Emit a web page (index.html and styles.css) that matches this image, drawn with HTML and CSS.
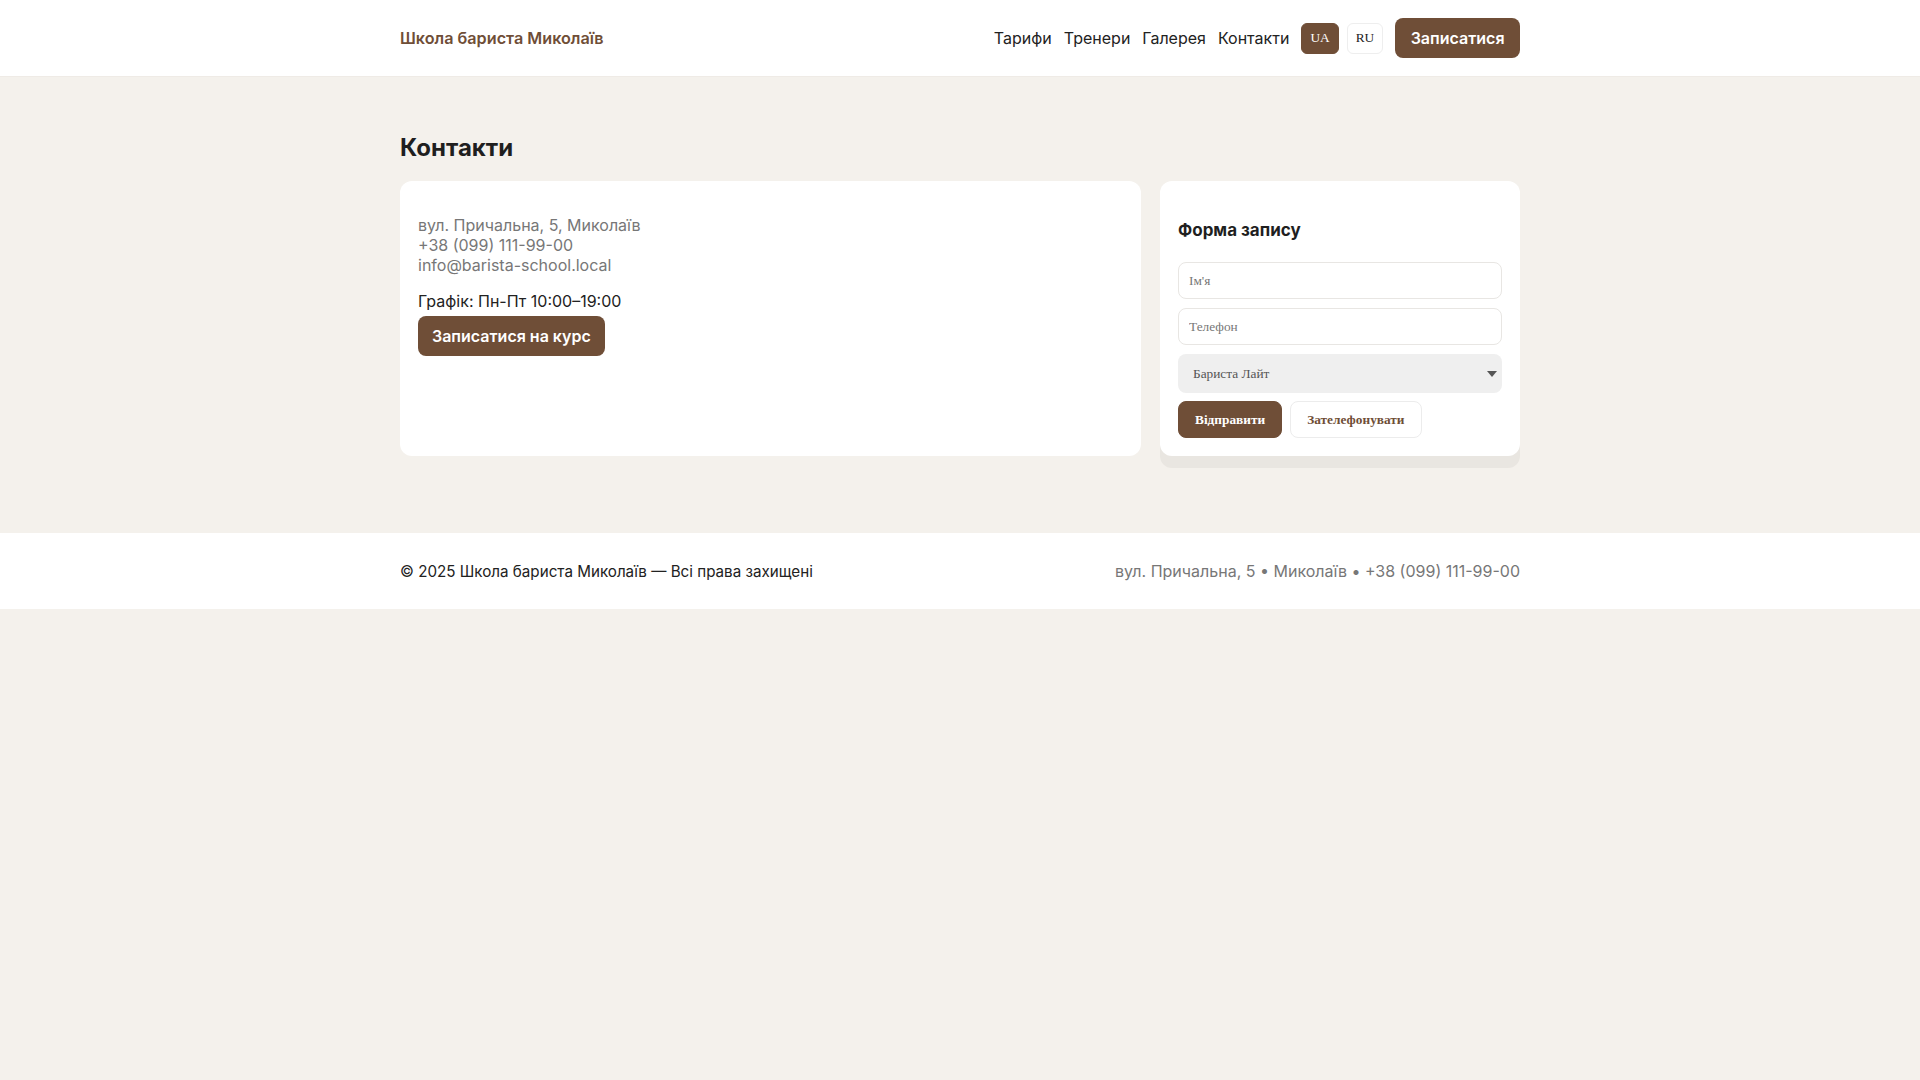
FILE: index.html
```html
<!DOCTYPE html>
<html lang="uk">
<head>
<meta charset="utf-8">
<title>Контакти — Школа бариста Миколаїв</title>
<link rel="stylesheet" href="styles.css">
</head>
<body>
<header class="site-header">
  <div class="container header-inner">
    <a class="logo" href="#">Школа бариста Миколаїв</a>
    <nav class="nav">
      <a href="#">Тарифи</a>
      <a href="#">Тренери</a>
      <a href="#">Галерея</a>
      <a href="#">Контакти</a>
      <button class="lang lang-active">UA</button>
      <button class="lang">RU</button>
      <a class="btn btn-header" href="#">Записатися</a>
    </nav>
  </div>
</header>

<main class="main">
  <div class="container">
    <h1 class="page-title">Контакти</h1>
    <div class="contact-grid">
      <section class="card info-card">
        <p class="info-lines">вул. Причальна, 5, Миколаїв<br>+38 (099) 111-99-00<br>info@barista-school.local</p>
        <p class="schedule">Графік: Пн-Пт 10:00–19:00</p>
        <a class="btn btn-course" href="#">Записатися на курс</a>
      </section>
      <aside class="card form-card">
        <h3 class="form-title">Форма запису</h3>
        <form class="form">
          <input class="field" type="text" placeholder="Ім'я">
          <input class="field" type="tel" placeholder="Телефон">
          <div class="select-wrap">
            <select class="select">
              <option>Бариста Лайт</option>
            </select>
          </div>
          <div class="form-actions">
            <button type="button" class="fbtn fbtn-primary">Відправити</button>
            <button type="button" class="fbtn fbtn-ghost">Зателефонувати</button>
          </div>
        </form>
      </aside>
    </div>
  </div>
</main>

<footer class="site-footer">
  <div class="container footer-inner">
    <span class="copy">© 2025 Школа бариста Миколаїв — Всі права захищені</span>
    <span class="footer-contacts">вул. Причальна, 5 • Миколаїв • +38 (099) 111-99-00</span>
  </div>
</footer>
</body>
</html>
```

FILE: styles.css
```css
* { box-sizing: border-box; }

html, body {
  margin: 0;
  padding: 0;
}

body {
  background: #f4f1ec;
  font-family: "Inter", "Noto Sans", sans-serif;
  font-size: 16px;
  color: #222;
}

a { text-decoration: none; color: inherit; }

.container {
  width: 1120px;
  margin: 0 auto;
}

.site-header {
  background: #fff;
  border-bottom: 1px solid #efebe6;
}

.header-inner {
  height: 76px;
  display: flex;
  align-items: center;
  justify-content: space-between;
}

.logo {
  color: #6f4e37;
  font-weight: 600;
  font-size: 16.2px;
}

.nav {
  display: flex;
  align-items: center;
  gap: 12px;
}

.nav a {
  color: #222;
  font-size: 16px;
}

.lang {
  font-family: "Liberation Serif", serif;
  font-size: 13.33px;
  height: 31px;
  padding: 0 8px;
  border-radius: 6px;
  border: 1px solid #eeeeee;
  background: #fff;
  color: #222;
}

.lang + .lang { margin-left: -4px; }

.lang-active {
  background: #6f4e37;
  border-color: #6f4e37;
  color: #fff;
}

.btn {
  display: inline-flex;
  align-items: center;
  justify-content: center;
  background: #6f4e37;
  color: #fff;
  font-weight: 600;
  font-size: 16px;
  border-radius: 8px;
  height: 40px;
  padding: 0 14px;
}

.nav a.btn {
  color: #fff;
  padding: 0 15.5px;
}

.main {
  padding: 56px 0 77px;
}

.page-title {
  margin: 0 0 18px;
  font-size: 24px;
  line-height: 30px;
  font-weight: 700;
  color: #1f1f1f;
}

.contact-grid {
  display: grid;
  grid-template-columns: 1fr 360px;
  gap: 19px;
  align-items: stretch;
}

.card {
  background: #fff;
  border-radius: 12px;
  padding: 18px;
}

.info-card p {
  margin: 0;
  line-height: 20px;
}

.info-lines {
  margin-top: 16px !important;
  color: #777;
}

.schedule {
  margin-top: 16px !important;
  color: #222;
}

.btn-course {
  margin-top: 5px;
  height: 40px;
}

.form-card {
  box-shadow: 0 12px 0 #e9e6e1;
}

.form-title {
  margin: 20px 0 21px;
  font-size: 17px;
  line-height: 22px;
  font-weight: 700;
  color: #1f1f1f;
}

.form {
  display: flex;
  flex-direction: column;
  gap: 9px;
}

.field {
  height: 37px;
  width: 100%;
  border: 1px solid #e8e6e3;
  border-radius: 8px;
  padding: 0 10px;
  font-family: "Liberation Serif", serif;
  font-size: 13.33px;
  color: #222;
  background: #fff;
  outline: none;
}

.field::placeholder { color: #777; }

.select-wrap {
  position: relative;
}

.select-wrap::after {
  content: "";
  position: absolute;
  right: 5px;
  top: 17px;
  border-left: 5px solid transparent;
  border-right: 5px solid transparent;
  border-top: 6px solid #555;
}

.select {
  -webkit-appearance: none;
  appearance: none;
  display: block;
  width: 100%;
  height: 39px;
  border: none;
  border-radius: 8px;
  background: #efefef;
  padding: 0 15px;
  font-family: "Liberation Serif", serif;
  font-size: 13.33px;
  color: #555;
  outline: none;
}

.form-actions {
  display: flex;
  gap: 8px;
  margin-top: -1px;
}

.fbtn {
  height: 37px;
  border-radius: 8px;
  font-family: "Liberation Serif", serif;
  font-weight: 700;
  font-size: 13.33px;
  padding: 0 16px;
}

.fbtn-primary {
  background: #6f4e37;
  color: #fff;
  border: 1px solid #6f4e37;
}

.fbtn-ghost {
  background: #fff;
  color: #6f4e37;
  border: 1px solid #ececec;
}

.site-footer {
  background: #fff;
}

.footer-inner {
  height: 76px;
  display: flex;
  align-items: center;
  justify-content: space-between;
}

.copy {
  color: #222;
  font-size: 15.2px;
}

.footer-contacts { color: #777; }
```
